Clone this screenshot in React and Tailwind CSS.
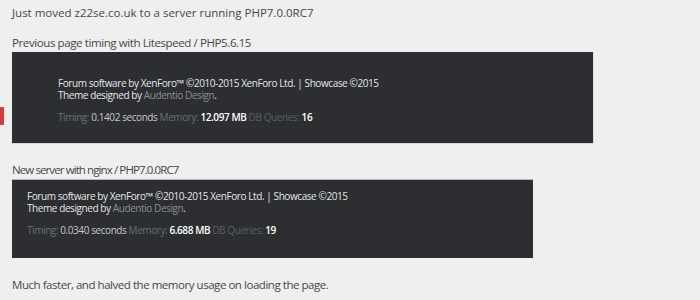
export default function App() {
  const Box = ({ timing, mem, q }) => (
    <div className="tracking-[-0.42px]">
      <div className="leading-[12px]">
        <div className="text-[#e6e6e6]">Forum software by XenForo™ ©2010-2015 XenForo Ltd. | Showcase ©2015</div>
        <div className="text-[#e6e6e6]">Theme designed by <span className="text-[#8a8d92]">Audentio Design</span>.</div>
      </div>
      <div className="mt-[10px] leading-[12px]">
        <span className="text-[#6b6e73]">Timing: </span><span className="text-[#c8c8c8]">{timing} seconds </span>
        <span className="text-[#6b6e73]">Memory: </span><span className="text-white font-semibold">{mem} MB </span>
        <span className="text-[#5b5e63]">DB Queries: </span><span className="text-white font-semibold">{q}</span>
      </div>
    </div>
  );
  return (
    <div className="w-[700px] h-[300px] bg-[#efefef] relative overflow-hidden text-[#474747]" style={{ fontFamily: '"Open Sans", sans-serif' }}>
      <div className="absolute left-0 top-[107px] w-[4px] h-[18px] bg-[#c9423c] rounded-r-[1px]" />
      <div className="pl-3 pt-[5px] text-[11.5px] leading-[16px]">
        <div className="tracking-[0px]">Just moved z22se.co.uk to a server running PHP7.0.0RC7</div>
        <div className="mt-[14px] tracking-[-0.4px]">Previous page timing with Litespeed / PHP5.6.15</div>
        <div className="mt-[1px] w-[582px] h-[92px] bg-[#2c2e32] border-r border-b border-[#d9d9d9] pl-[46px] pt-[25px] text-[10px]">
          <Box timing="0.1402" mem="12.097" q="16" />
        </div>
        <div className="mt-[18px] tracking-[-0.9px]">New server with nginx / PHP7.0.0RC7</div>
        <div className="mt-[1px] w-[521px] h-[79px] bg-[#2c2e32] border-t border-[#b5b5b5] pl-[15px] pt-[10px] text-[10px]">
          <Box timing="0.0340" mem="6.688" q="19" />
        </div>
        <div className="mt-[19px] tracking-[-0.46px]">Much faster, and halved the memory usage on loading the page.</div>
      </div>
    </div>
  );
}
